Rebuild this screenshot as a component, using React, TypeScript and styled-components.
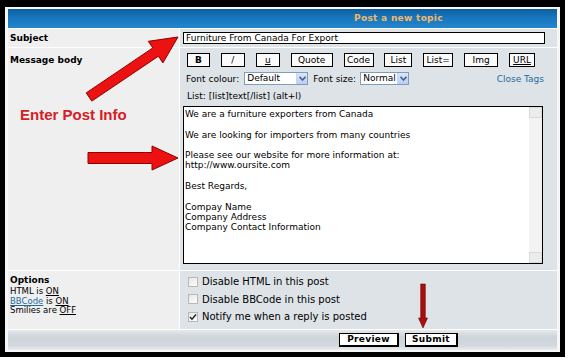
import React from "react";
import styled, { createGlobalStyle } from "styled-components";

const GlobalStyle = createGlobalStyle`
  html, body { margin: 0; padding: 0; background: #fff; }
  body { font-family: "DejaVu Sans", Verdana, sans-serif; font-size: 9px; color: #000; }
  * { box-sizing: border-box; }
`;

const Frame = styled.div`
  position: relative;
  width: 565px;
  height: 357px;
  border-style: solid;
  border-color: #000;
  border-width: 7px 5px 5px 5px;
  background: #f7f7f7;
  padding: 2px 3px;
`;

const Table = styled.div`
  display: grid;
  grid-template-columns: 171px 1fr;
  grid-template-rows: 19px 18px 222px 58px 20px;
  gap: 1px;
  background: #fff;
  height: 100%;
`;

const Header = styled.div`
  grid-column: 1 / -1;
  background: linear-gradient(#0d5f9f, #1876bd 45%, #2386cc);
  color: #f3b867;
  font-weight: bold;
  font-size: 9px;
  letter-spacing: 0.3px;
  line-height: 19px;
  padding-left: 346px;
`;

const LabelCell = styled.div<{ $pad?: string }>`
  background: #efefef;
  padding: ${(p) => p.$pad || "4px 2px"};
`;

const FieldCell = styled.div<{ $pad?: string }>`
  background: #dee3e7;
  padding: ${(p) => p.$pad || "3px"};
  display: flex;
  flex-direction: column;
`;

const Label = styled.div`
  font-weight: bold;
  font-size: 9px;
  line-height: 10px;
`;

const Annotation = styled.div`
  margin-top: 41px;
  padding-left: 10px;
  font-family: "Liberation Sans", Arial, sans-serif;
  font-weight: bold;
  font-size: 15px;
  color: #d42026;
`;

const SubjectInput = styled.input`
  width: 362px;
  height: 13px;
  border: 1px solid #000;
  background: #fff;
  padding: 0 2px;
  margin: 0;
  font-family: "DejaVu Sans", Verdana, sans-serif;
  font-size: 9px;
  color: #000;
  outline: none;
`;

const Toolbar = styled.div`
  display: flex;
  justify-content: space-between;
  margin-left: 4px;
  width: 348px;
  height: 14px;
`;

const TagButton = styled.div<{ $w: number; $u?: boolean }>`
  width: ${(p) => p.$w}px;
  height: 14px;
  border: 1px solid #000;
  background: #fafafa;
  font-size: 9px;
  line-height: 12px;
  text-align: center;
  text-decoration: ${(p) => (p.$u ? "underline" : "none")};
`;

const FontRow = styled.div`
  display: flex;
  align-items: center;
  height: 17px;
  margin-top: 3px;
  padding-left: 3px;
`;

const Select = styled.div<{ $w: number }>`
  display: flex;
  width: ${(p) => p.$w}px;
  height: 13px;
  margin: 0 5px 0 ${(p) => (p.$w > 55 ? 5 : 4)}px;
  border: 1px solid #7f9db9;
  background: #fff;
  font-size: 9px;
`;

const SelectText = styled.span`
  flex: 1;
  padding-left: 2px;
  line-height: 11px;
`;

const SelectArrow = styled.span`
  width: 11px;
  background: linear-gradient(#dbe6fb, #b9cdf6);
  border-left: 1px solid #c3d3fd;
  display: flex;
  align-items: center;
  justify-content: center;
`;

const CloseTags = styled.a`
  margin-left: auto;
  margin-right: 10px;
  color: #1d6c9c;
  font-size: 9px;
  text-decoration: none;
`;

const Hint = styled.div`
  margin-top: 3px;
  height: 13px;
  line-height: 13px;
  padding-left: 4px;
  font-size: 9px;
`;

const TextBox = styled.div`
  display: flex;
  width: 360px;
  height: 158px;
  margin-top: 3px;
  border: 1px solid #000;
  background: #fff;
`;

const TextBody = styled.div`
  flex: 1;
  padding: 2px 1px;
  white-space: pre-line;
  line-height: 10.3px;
  font-size: 9px;
`;

const ScrollTrack = styled.div`
  width: 13px;
  display: flex;
  flex-direction: column;
  justify-content: space-between;
  background: #f3f3f3;
`;

const ScrollButton = styled.div`
  height: 11px;
  background: #ececec;
  border: 1px solid #dadada;
`;

const OptionLines = styled.div`
  margin-top: 2px;
  font-size: 8.5px;
  line-height: 9.5px;
`;

const Flag = styled.span<{ $link?: boolean }>`
  text-decoration: underline;
  color: ${(p) => (p.$link ? "#1d6c9c" : "#000")};
`;

const CheckRow = styled.label`
  display: flex;
  align-items: center;
  height: 17.5px;
  padding-left: 8px;
  font-size: 10px;
`;

const CheckBox = styled.span`
  width: 10px;
  height: 10px;
  margin-right: 4px;
  border: 1px solid #b8b8b8;
  background: linear-gradient(135deg, #e6e6e6, #fdfdfd);
  display: flex;
  align-items: center;
  justify-content: center;
`;

const BottomBar = styled.div`
  grid-column: 1 / -1;
  background: linear-gradient(#e6e9ec, #cdd4da 35%, #d3d9de 80%, #e9ecef);
  display: flex;
  gap: 6px;
  padding: 3px 0 0 331px;
`;

const SubmitButton = styled.div<{ $w: number }>`
  width: ${(p) => p.$w}px;
  height: 14px;
  border-style: solid;
  border-color: #000;
  border-width: 1px 2px 2px 1px;
  background: #fff;
  font-weight: bold;
  font-size: 9px;
  line-height: 11px;
  text-align: center;
  letter-spacing: 0.3px;
`;

const Overlay = styled.svg`
  position: absolute;
  top: -7px;
  left: -5px;
  width: 568px;
  height: 360px;
  pointer-events: none;
`;

function arrowPoints(x1: number, y1: number, x2: number, y2: number, s: number, h: number, hl: number) {
  const len = Math.hypot(x2 - x1, y2 - y1);
  const ux = (x2 - x1) / len;
  const uy = (y2 - y1) / len;
  const nx = -uy;
  const ny = ux;
  const bx = x2 - ux * hl;
  const by = y2 - uy * hl;
  const pts = [
    [x1 + nx * s, y1 + ny * s],
    [bx + nx * s, by + ny * s],
    [bx + nx * h, by + ny * h],
    [x2, y2],
    [bx - nx * h, by - ny * h],
    [bx - nx * s, by - ny * s],
    [x1 - nx * s, y1 - ny * s],
  ];
  return pts.map((p) => p[0].toFixed(1) + "," + p[1].toFixed(1)).join(" ");
}

const tags: { label: string; w: number; u?: boolean }[] = [
  { label: "B", w: 23 },
  { label: "i", w: 24 },
  { label: "u", w: 24, u: true },
  { label: "Quote", w: 42 },
  { label: "Code", w: 30 },
  { label: "List", w: 28 },
  { label: "List=", w: 30 },
  { label: "Img", w: 34 },
  { label: "URL", w: 26, u: true },
];

const message = `We are a furniture exporters from Canada

We are looking for importers from many countries

Please see our website for more information at:
http://www.oursite.com

Best Regards,

Compay Name
Company Address
Company Contact Information`;

const Arrow = () => (
  <svg width="7" height="5" viewBox="0 0 7 5">
    <path d="M0.5 0.8 L3.5 4 L6.5 0.8" fill="none" stroke="#4d6185" strokeWidth="1.6" />
  </svg>
);

const Check = () => (
  <svg width="8" height="8" viewBox="0 0 8 8">
    <path d="M1 4 L3 6.2 L7 1.5" fill="none" stroke="#222" strokeWidth="1.5" />
  </svg>
);

export default function App() {
  return (
    <>
      <GlobalStyle />
      <Frame>
        <Table>
          <Header>Post a new topic</Header>

          <LabelCell $pad="4px 2px">
            <Label>Subject</Label>
          </LabelCell>
          <FieldCell>
            <SubjectInput readOnly defaultValue="Furniture From Canada For Export" />
          </FieldCell>

          <LabelCell $pad="7px 2px">
            <Label>Message body</Label>
            <Annotation>Enter Post Info</Annotation>
          </LabelCell>
          <FieldCell $pad="5px 3px">
            <Toolbar>
              {tags.map((t) => (
                <TagButton key={t.label} $w={t.w} $u={t.u}>
                  {t.label === "i" ? "/" : t.label === "B" ? <b>B</b> : t.label}
                </TagButton>
              ))}
            </Toolbar>
            <FontRow>
              Font colour:
              <Select $w={64}>
                <SelectText>Default</SelectText>
                <SelectArrow><Arrow /></SelectArrow>
              </Select>
              Font size:
              <Select $w={49}>
                <SelectText>Normal</SelectText>
                <SelectArrow><Arrow /></SelectArrow>
              </Select>
              <CloseTags href="#">Close Tags</CloseTags>
            </FontRow>
            <Hint>List: [list]text[/list] (alt+l)</Hint>
            <TextBox>
              <TextBody>{message}</TextBody>
              <ScrollTrack>
                <ScrollButton />
                <ScrollButton />
              </ScrollTrack>
            </TextBox>
          </FieldCell>

          <LabelCell $pad="4px 2px">
            <Label>Options</Label>
            <OptionLines>
              <div>HTML is <Flag>ON</Flag></div>
              <div><Flag $link>BBCode</Flag> is <Flag>ON</Flag></div>
              <div>Smilies are <Flag>OFF</Flag></div>
            </OptionLines>
          </LabelCell>
          <FieldCell $pad="2px 0 0 0">
            <CheckRow><CheckBox />Disable HTML in this post</CheckRow>
            <CheckRow><CheckBox />Disable BBCode in this post</CheckRow>
            <CheckRow><CheckBox><Check /></CheckBox>Notify me when a reply is posted</CheckRow>
          </FieldCell>

          <BottomBar>
            <SubmitButton $w={60}>Preview</SubmitButton>
            <SubmitButton $w={53}>Submit</SubmitButton>
          </BottomBar>
        </Table>

        <Overlay viewBox="0 0 568 360">
          <polygon points={arrowPoints(89, 97, 178, 37, 5, 13, 27)} fill="#ee1111" stroke="#8a0000" strokeWidth="1" />
          <polygon points={arrowPoints(88, 158, 178, 158, 5.5, 12, 26)} fill="#ee1111" stroke="#8a0000" strokeWidth="1" />
          <polygon points={arrowPoints(423, 284, 423, 328, 2.3, 4.5, 10)} fill="#a80e0e" stroke="#6e0000" strokeWidth="0.6" />
        </Overlay>
      </Frame>
    </>
  );
}
